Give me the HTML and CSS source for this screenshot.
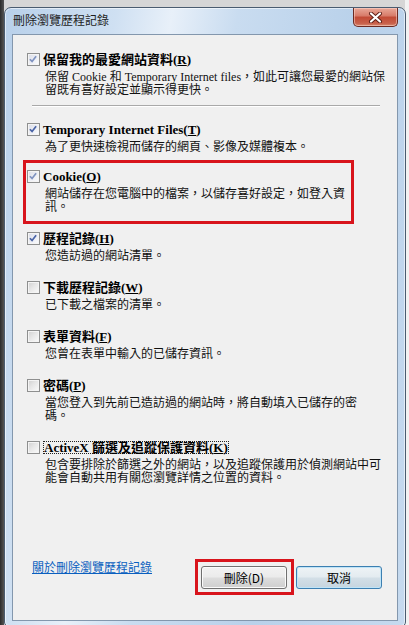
FILE: index.html
```html
<!DOCTYPE html>
<html lang="zh-Hant">
<head>
<meta charset="utf-8">
<title>刪除瀏覽歷程記錄</title>
<link rel="stylesheet" href="styles.css">
</head>
<body>
<div class="window">
  <div class="titlebar">
    <span class="title">刪除瀏覽歷程記錄</span>
    <span class="close"><svg width="17" height="11" viewBox="0 0 17 11"><path d="M4 1.5 L13 9.5 M13 1.5 L4 9.5" stroke="#5a1c14" stroke-width="4" stroke-linecap="round"/><path d="M4 1.5 L13 9.5 M13 1.5 L4 9.5" stroke="#ffffff" stroke-width="2.2" stroke-linecap="round"/></svg></span>
  </div>
  <div class="panel">
    <div class="item first">
      <div class="head"><span class="cb on"><svg viewBox="0 0 13 13" width="11" height="11"><path d="M2.2 6.2 L4.8 8.8 L9.6 2.6" fill="none" stroke="#7f93c0" stroke-width="2"/></svg></span><span class="label">保留我的最愛網站資料(<u>R</u>)</span></div>
      <p class="desc">保留 Cookie 和 Temporary Internet files，如此可讓您最愛的網站保<br>留既有喜好設定並顯示得更快。</p>
    </div>
    <div class="sep"></div>
    <div class="item second">
      <div class="head"><span class="cb on"><svg viewBox="0 0 13 13" width="11" height="11"><path d="M2.2 6.2 L4.8 8.8 L9.6 2.6" fill="none" stroke="#4a64a6" stroke-width="2"/></svg></span><span class="label">Temporary Internet Files(<u>T</u>)</span></div>
      <p class="desc">為了更快速檢視而儲存的網頁、影像及媒體複本。</p>
    </div>
    <div class="item marked">
      <div class="head"><span class="cb on"><svg viewBox="0 0 13 13" width="11" height="11"><path d="M2.2 6.2 L4.8 8.8 L9.6 2.6" fill="none" stroke="#7f93c0" stroke-width="2"/></svg></span><span class="label">Cookie(<u>O</u>)</span></div>
      <p class="desc">網站儲存在您電腦中的檔案，以儲存喜好設定，如登入資<br>訊。</p>
    </div>
    <div class="item">
      <div class="head"><span class="cb on"><svg viewBox="0 0 13 13" width="11" height="11"><path d="M2.2 6.2 L4.8 8.8 L9.6 2.6" fill="none" stroke="#4a64a6" stroke-width="2"/></svg></span><span class="label">歷程記錄(<u>H</u>)</span></div>
      <p class="desc">您造訪過的網站清單。</p>
    </div>
    <div class="item">
      <div class="head"><span class="cb"></span><span class="label">下載歷程記錄(<u>W</u>)</span></div>
      <p class="desc">已下載之檔案的清單。</p>
    </div>
    <div class="item">
      <div class="head"><span class="cb"></span><span class="label">表單資料(<u>F</u>)</span></div>
      <p class="desc">您曾在表單中輸入的已儲存資訊。</p>
    </div>
    <div class="item">
      <div class="head"><span class="cb"></span><span class="label">密碼(<u>P</u>)</span></div>
      <p class="desc">當您登入到先前已造訪過的網站時，將自動填入已儲存的密<br>碼。</p>
    </div>
    <div class="item">
      <div class="head"><span class="cb"></span><span class="label focus">ActiveX 篩選及追蹤保護資料(<u>K</u>)</span></div>
      <p class="desc">包含要排除於篩選之外的網站，以及追蹤保護用於偵測網站中可<br>能會自動共用有關您瀏覽詳情之位置的資料。</p>
    </div>
    <div class="footer">
      <a class="link" href="#">關於刪除瀏覽歷程記錄</a>
      <div class="buttons">
        <span class="annot"><button class="btn">刪除(D)</button></span>
        <button class="btn default">取消</button>
      </div>
    </div>
  </div>
</div>
</body>
</html>
```

FILE: styles.css
```css
html, body {
  margin: 0;
  padding: 0;
}
body {
  width: 409px;
  height: 625px;
  overflow: hidden;
  background: linear-gradient(to right, #2b2b2b 0, #555 4px, #d6d6d6 4px, #d6d6d6 405px, #f2f2f2 405px);
  font-family: "Liberation Serif", "Noto Sans CJK TC", serif;
  color: #000;
}
.window {
  box-sizing: border-box;
  margin: 7px 0 0 4px;
  width: 402px;
  height: 620px;
  border: 1px solid #4a5c70;
  border-radius: 7px 7px 5px 5px;
  background: linear-gradient(100deg, #b8d0ea 0%, #cfe0f2 22%, #e8f0f9 33%, #c9dcf0 46%, #b9d1ea 70%, #c6daef 100%);
  box-shadow: inset 0 0 0 1px rgba(255,255,255,0.55);
  display: flex;
  flex-direction: column;
}
.titlebar {
  height: 26px;
  display: flex;
  justify-content: space-between;
  align-items: flex-start;
  padding-left: 8px;
  flex: none;
}
.title {
  margin-top: 5px;
  font-family: "Noto Sans CJK TC", sans-serif;
  font-size: 12px;
  line-height: 14px;
  color: #1e1e1e;
}
.close {
  box-sizing: border-box;
  width: 45px;
  height: 19px;
  margin-right: 7px;
  border: 1px solid #6b2a22;
  border-top: none;
  border-radius: 0 0 5px 5px;
  background: linear-gradient(#e9a898 0%, #d77a68 45%, #c24a35 50%, #c8604a 85%, #d88a70 100%);
  box-shadow: inset 0 0 0 1px rgba(255,220,210,0.5);
  display: flex;
  align-items: center;
  justify-content: center;
}
.close svg { display: block; }
.panel {
  flex: 1;
  box-sizing: border-box;
  margin: 0 7px 5px 7px;
  border: 1px solid #8397ad;
  background: #f0f0f0;
  padding: 18px 15px 31px 14px;
  display: flex;
  flex-direction: column;
}
.item {
  position: relative;
  margin-bottom: 18px;
}
.item.first { margin-bottom: 8px; }
.item.second { margin-bottom: 16px; }
.head {
  display: flex;
  align-items: center;
  gap: 3px;
  height: 13px;
}
.cb {
  box-sizing: border-box;
  width: 13px;
  height: 13px;
  flex: none;
  border: 1px solid #8e8f8f;
  background: linear-gradient(135deg, #cfcfcf 0%, #e6e6e6 45%, #fbfbfb 100%);
  box-shadow: inset 0 0 0 1px #f4f4f4;
  display: flex;
  align-items: center;
  justify-content: center;
}
.cb.on { background: linear-gradient(135deg, #dadce6 0%, #eceef4 50%, #fbfbfd 100%); }
.cb svg { display: block; }
.label {
  font-weight: bold;
  font-size: 13px;
  line-height: 13px;
  white-space: nowrap;
}
.label.focus {
  box-sizing: border-box;
  height: 13px;
  line-height: 11px;
  border: 1px dotted #222;
}
.desc {
  margin: 5px 0 0 18px;
  font-size: 12px;
  line-height: 13px;
  white-space: nowrap;
  color: #111;
}
.sep {
  margin: 0 0 16px 5px;
  width: 348px;
  height: 1px;
  background: #a9a9a9;
  border-bottom: 1px solid #fff;
}
.item.marked::after {
  content: "";
  position: absolute;
  left: -4px;
  top: -10px;
  width: 331px;
  height: 64px;
  box-sizing: border-box;
  border: 3px solid #d8141c;
  pointer-events: none;
}
.footer {
  margin-top: auto;
  display: flex;
  justify-content: space-between;
  align-items: flex-start;
  height: 29px;
}
.link {
  margin-left: 5px;
  font-family: "Noto Sans CJK TC", sans-serif;
  font-size: 12px;
  line-height: 13px;
  color: #0a5fbf;
  text-decoration: underline;
}
.buttons {
  display: flex;
  gap: 9px;
  margin-top: 6px;
}
.annot {
  position: relative;
  display: block;
}
.annot::after {
  content: "";
  position: absolute;
  left: -6px;
  top: -7px;
  right: -7px;
  bottom: -6px;
  border: 3px solid #d8141c;
  pointer-events: none;
}
.btn {
  display: block;
  box-sizing: border-box;
  width: 86px;
  height: 23px;
  padding: 0;
  border: 1px solid #707070;
  border-radius: 3px;
  background: linear-gradient(#f2f2f2 0%, #ebebeb 49%, #dddddd 51%, #cfcfcf 100%);
  box-shadow: inset 0 0 0 1px #fbfbfb;
  font-family: "Noto Sans CJK TC", sans-serif;
  font-size: 12px;
  line-height: 20px;
  color: #000;
}
.btn.default {
  border-color: #3c7fb1;
  background: linear-gradient(#eef3f6 0%, #e3ebf0 49%, #d3dfe7 51%, #c6d5df 100%);
  box-shadow: inset 0 0 0 1px #bfe4f7;
}
```
